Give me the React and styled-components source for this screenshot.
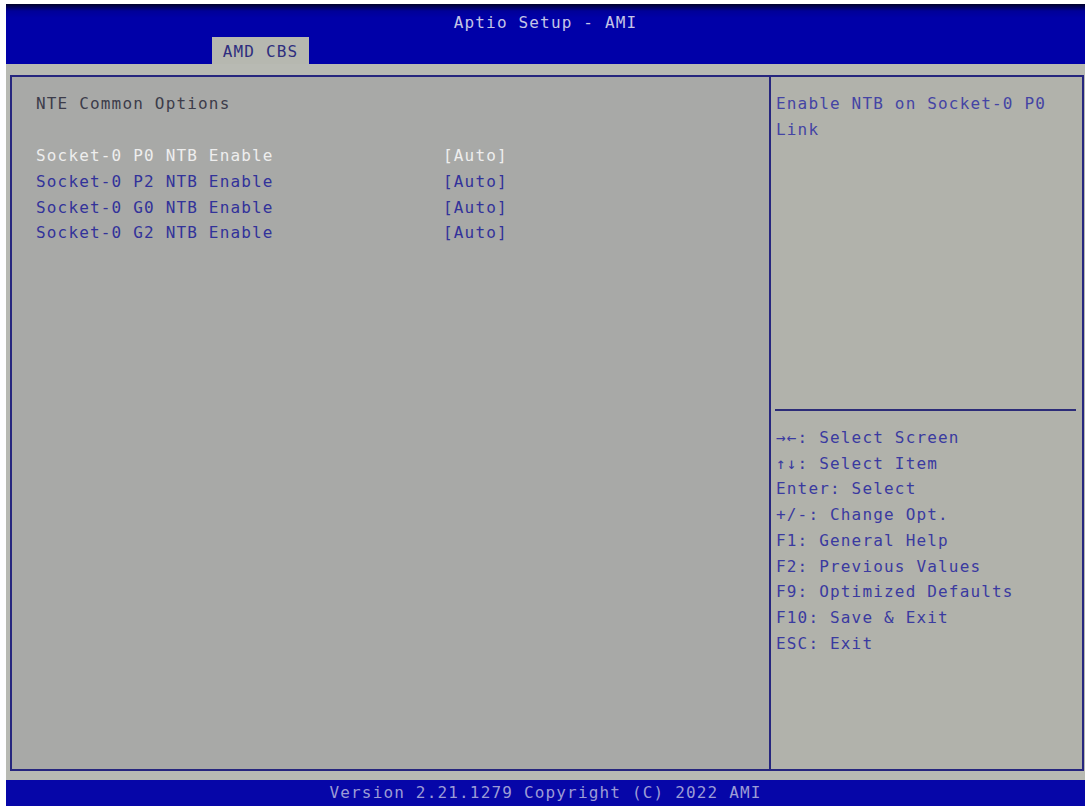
import React from "react";
import styled, { createGlobalStyle } from "styled-components";

const GlobalStyle = createGlobalStyle`
  html, body {
    margin: 0;
    padding: 0;
    background: #ffffff;
  }
  body {
    font-family: "DejaVu Sans Mono", "Liberation Mono", monospace;
  }
`;

const Screen = styled.div`
  width: 1087px;
  height: 806px;
  box-sizing: border-box;
  padding: 4px 2px 0 6px;
  display: flex;
  flex-direction: column;
  font-family: "DejaVu Sans Mono", "Liberation Mono", monospace;
  font-size: 16px;
  letter-spacing: 1.17px;
  line-height: 25.7px;
`;

const Header = styled.header`
  height: 60px;
  background: linear-gradient(#00002a 0px, #000098 7px, #0000a8 14px, #0000a8 100%);
  display: flex;
  flex-direction: column;
  justify-content: space-between;
`;

const Title = styled.div`
  text-align: center;
  color: #c4c4e6;
  padding-top: 6px;
`;

const TabRow = styled.div`
  display: flex;
  padding-left: 206px;
`;

const Tab = styled.div`
  width: 97px;
  height: 27px;
  box-sizing: border-box;
  background: #b6b8b0;
  color: #2e2e7e;
  text-align: center;
  line-height: 29px;
`;

const Body = styled.main`
  flex: 1;
  background: #b8bab3;
  padding: 11px 1px 9px 4px;
  display: flex;
`;

const Panel = styled.section`
  flex: 1;
  border: 2px solid #26267e;
  display: grid;
  grid-template-columns: 757px 1fr;
  background: #a8a9a7;
`;

const Main = styled.div`
  padding: 14px 0 0 24px;
`;

const Heading = styled.div`
  color: #3c3c4a;
  margin-bottom: 26.5px;
`;

const OptionRow = styled.div`
  display: grid;
  grid-template-columns: 407px auto;
  color: ${({ selected }) => (selected ? "#eeeeee" : "#32329a")};
`;

const Side = styled.aside`
  border-left: 2px solid #26267e;
  background: #b1b2ab;
  display: flex;
  flex-direction: column;
`;

const Help = styled.div`
  height: 318px;
  padding: 14px 20px 0 5px;
  color: #4444a4;
`;

const Rule = styled.hr`
  margin: 0 6px 0 4px;
  border: none;
  border-top: 2px solid #2c2c78;
`;

const Keys = styled.div`
  padding: 14px 0 0 5px;
  color: #3a3aa0;
`;

const Footer = styled.footer`
  height: 26px;
  background: #0606a8;
  color: #9c9cd6;
  text-align: center;
  line-height: 26px;
`;

const options = [
  { label: "Socket-0 P0 NTB Enable", value: "[Auto]", selected: true },
  { label: "Socket-0 P2 NTB Enable", value: "[Auto]" },
  { label: "Socket-0 G0 NTB Enable", value: "[Auto]" },
  { label: "Socket-0 G2 NTB Enable", value: "[Auto]" },
];

const keys = [
  "→←: Select Screen",
  "↑↓: Select Item",
  "Enter: Select",
  "+/-: Change Opt.",
  "F1: General Help",
  "F2: Previous Values",
  "F9: Optimized Defaults",
  "F10: Save & Exit",
  "ESC: Exit",
];

export default function App() {
  return (
    <>
      <GlobalStyle />
      <Screen>
        <Header>
          <Title>Aptio Setup - AMI</Title>
          <TabRow>
            <Tab>AMD CBS</Tab>
          </TabRow>
        </Header>
        <Body>
          <Panel>
            <Main>
              <Heading>NTE Common Options</Heading>
              {options.map((o) => (
                <OptionRow key={o.label} selected={o.selected}>
                  <span>{o.label}</span>
                  <span>{o.value}</span>
                </OptionRow>
              ))}
            </Main>
            <Side>
              <Help>
                Enable NTB on Socket-0 P0
                <br />
                Link
              </Help>
              <Rule />
              <Keys>
                {keys.map((k) => (
                  <div key={k}>{k}</div>
                ))}
              </Keys>
            </Side>
          </Panel>
        </Body>
        <Footer>Version 2.21.1279 Copyright (C) 2022 AMI</Footer>
      </Screen>
    </>
  );
}
